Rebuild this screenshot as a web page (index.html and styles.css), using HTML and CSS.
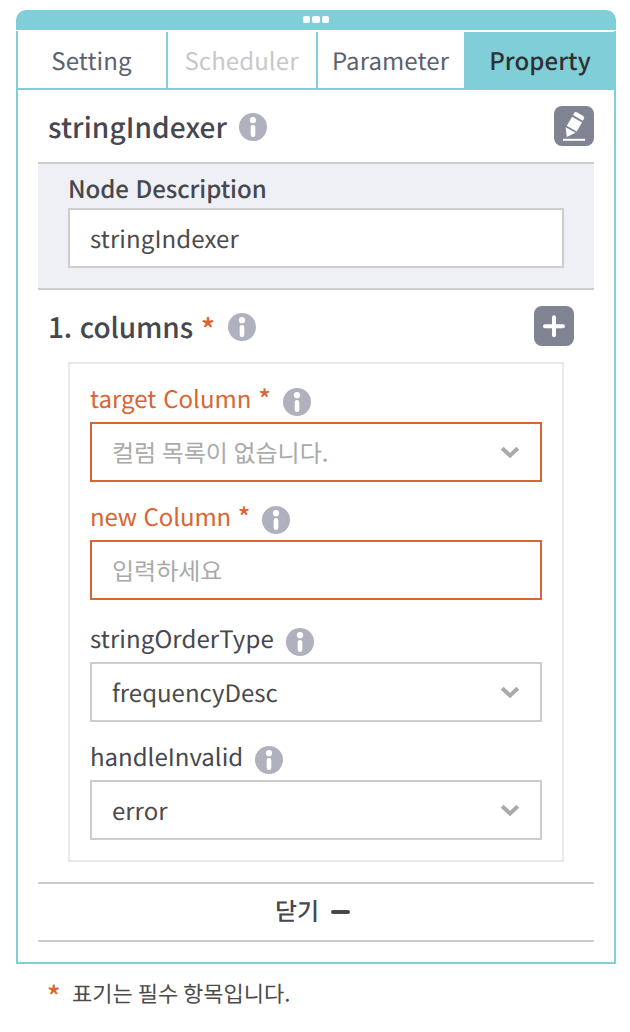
FILE: index.html
```html
<!DOCTYPE html>
<html lang="ko">
<head>
<meta charset="utf-8">
<title>stringIndexer</title>
<link rel="stylesheet" href="styles.css">
</head>
<body>
<svg class="defs" width="0" height="0">
  <symbol id="info" viewBox="0 0 28 28"><circle cx="14" cy="14" r="14" fill="#afb1be"/><circle cx="14" cy="7.2" r="3.1" fill="#fff"/><rect x="11.7" y="12" width="4.6" height="12" rx="2.2" fill="#fff"/></symbol>
  <symbol id="chevron" viewBox="0 0 20 14"><path d="M2.2 2.2 10 9.6l7.8-7.4" fill="none" stroke="#aaa" stroke-width="4"/></symbol>
</svg>
<main class="panel">
  <div class="handle"><i></i><i></i><i></i></div>
  <div class="frame">
    <nav class="tabs">
      <div class="tab">Setting</div>
      <div class="tab disabled">Scheduler</div>
      <div class="tab third">Parameter</div>
      <div class="tab active">Property</div>
    </nav>
    <div class="content">
      <header class="title-row">
        <h1 class="heading title">stringIndexer</h1>
        <svg class="info"><use href="#info"/></svg>
        <button class="square"><svg width="40" height="40" viewBox="0 0 40 40"><g fill="#fff"><path d="M20.2 7.1Q21 5.3 22.8 6.2L29.2 9.9Q30.9 11 30 12.6L28.8 14.8 18.9 9.1Z"/><path d="M18.1 10.7 28 16.4 22.7 25.5 12.8 19.8Z"/><path d="M11.7 21.2 21.6 26.7 12.7 31.1Z"/><path d="M9 32.8H31V34.8H9Z"/></g></svg></button>
      </header>
      <section class="description">
        <label class="desc-label">Node Description</label>
        <div class="field desc-field">stringIndexer</div>
      </section>
      <header class="title-row columns-row">
        <h2 class="heading columns-heading">1. columns <span class="star">*</span></h2>
        <svg class="info"><use href="#info"/></svg>
        <button class="square add"><svg width="40" height="40" viewBox="0 0 40 40"><path d="M20 11.3V29.3M11 20.3H29" stroke="#fff" stroke-width="4" stroke-linecap="round"/></svg></button>
      </header>
      <section class="columns-box">
        <div class="label required"><span class="label-text">target Column <b>*</b></span><svg class="info"><use href="#info"/></svg></div>
        <div class="field error placeholder"><span>컬럼 목록이 없습니다.</span><svg class="chevron"><use href="#chevron"/></svg></div>
        <div class="label required"><span class="label-text new">new Column <b>*</b></span><svg class="info"><use href="#info"/></svg></div>
        <div class="field error placeholder"><span>입력하세요</span></div>
        <div class="label spaced"><span class="label-text order">stringOrderType</span><svg class="info"><use href="#info"/></svg></div>
        <div class="field"><span>frequencyDesc</span><svg class="chevron"><use href="#chevron"/></svg></div>
        <div class="label"><span class="label-text">handleInvalid</span><svg class="info"><use href="#info"/></svg></div>
        <div class="field"><span>error</span><svg class="chevron"><use href="#chevron"/></svg></div>
      </section>
      <div class="close"><span>닫기</span><i class="dash"></i></div>
    </div>
  </div>
  <footer class="note"><span class="star">*</span><span>표기는 필수 항목입니다.</span></footer>
</main>
</body>
</html>
```
FILE: styles.css
```css
* { box-sizing: border-box; }
body { margin: 0; background: #fff; color: #46474f; font: 24px/36px "Noto Sans CJK KR", sans-serif; text-rendering: geometricPrecision; overflow: hidden; }
.defs { display: block; height: 0; }
.panel { width: 600px; margin: 10px 0 0 16px; }
.handle { height: 20px; margin-bottom: 1px; background: #80cfd8; border-radius: 10px 10px 0 0; display: flex; justify-content: center; gap: 2px; padding-top: 6px; }
.handle i { width: 7.4px; height: 7px; border-radius: 2px; background: #fff; }
.frame { height: 933px; border: 2px solid #80cfd8; border-top: 0; padding-top: 1px; }
.tabs { height: 58px; display: grid; grid-template-columns: 150px 150px 146px 150px; border-bottom: 2px solid #80cfd8; }
.tab { border-right: 2px solid #80cfd8; padding-right: 1px; text-align: center; line-height: 56px; letter-spacing: 0.1px; color: #5d616e; }
.tab.disabled { color: #c7c8cc; }
.tab.third { border-right: 0; }
.tab.active { border-right: 0; padding: 0 0 0 2px; background: #80cfd8; color: #303033; font-weight: 500; }
.content { padding: 0 20px; }
.title-row { height: 72px; padding-left: 10px; display: flex; align-items: center; }
.heading { margin: 0; padding-top: 2px; font-size: 28px; font-weight: 500; line-height: 40px; }
.title { letter-spacing: 0.1px; }
.columns-heading { letter-spacing: -0.12px; }
.heading .star { position: relative; top: 3px; font-size: 30px; line-height: 1; }
.info { width: 28px; height: 28px; margin-left: 12px; flex: none; }
.title-row .info { margin-top: 1px; }
.star { color: #d96532; }
.square { width: 40px; height: 40px; padding: 0; border: 0; border-radius: 8px; background: #808492; margin-left: auto; }
.square svg { display: block; }
.description { height: 128px; background: #eff0f5; border-top: 2px solid #cdcdcd; border-bottom: 2px solid #cdcdcd; padding: 6px 30px 0; }
.desc-label { display: block; height: 38px; font-weight: 500; letter-spacing: -0.06px; }
.desc-field { letter-spacing: 0.1px; }
.field { height: 60px; border: 2px solid #cdcdcd; background: #fff; padding: 0 20px; line-height: 56px; display: flex; align-items: center; justify-content: space-between; color: #4b4b4b; }
.columns-row { padding-right: 20px; }
.columns-row .info { margin-left: 12.5px; }
.columns-box { height: 500px; margin: 0 30px; border: 2px solid #e8e8e8; padding: 0 20px; }
.label { height: 58px; padding-top: 16px; display: flex; align-items: flex-start; }
.label .info { margin-top: 8px; }
.label.spaced { height: 62px; padding-top: 20px; }
.order { letter-spacing: 0.1px; }
.required { color: #d96532; }
.label b { font-size: 26px; font-weight: 500; line-height: 1; position: relative; top: 1px; }
.required .label-text { letter-spacing: 0.02px; }
.required .new { letter-spacing: -0.1px; }
.error { border-color: #d96532; }
.placeholder { color: #aaa; word-spacing: -1.2px; }
.chevron { width: 20px; height: 14px; margin-top: 2px; }
.close { height: 60px; margin-top: 20px; border-top: 2px solid #cdcdcd; border-bottom: 2px solid #cdcdcd; display: flex; align-items: center; justify-content: center; padding: 0 7px 0 0; font-weight: 500; }
.close span { padding-bottom: 4px; }
.dash { width: 19px; height: 4px; border-radius: 2px; background: #46474f; margin-left: 12px; }
.note { padding: 11px 0 0 31px; display: flex; gap: 12px; font-size: 22px; word-spacing: -1.2px; color: #4b4b4b; }
.note .star { width: 13px; padding-top: 3px; font-size: 28px; font-weight: 500; }
```
